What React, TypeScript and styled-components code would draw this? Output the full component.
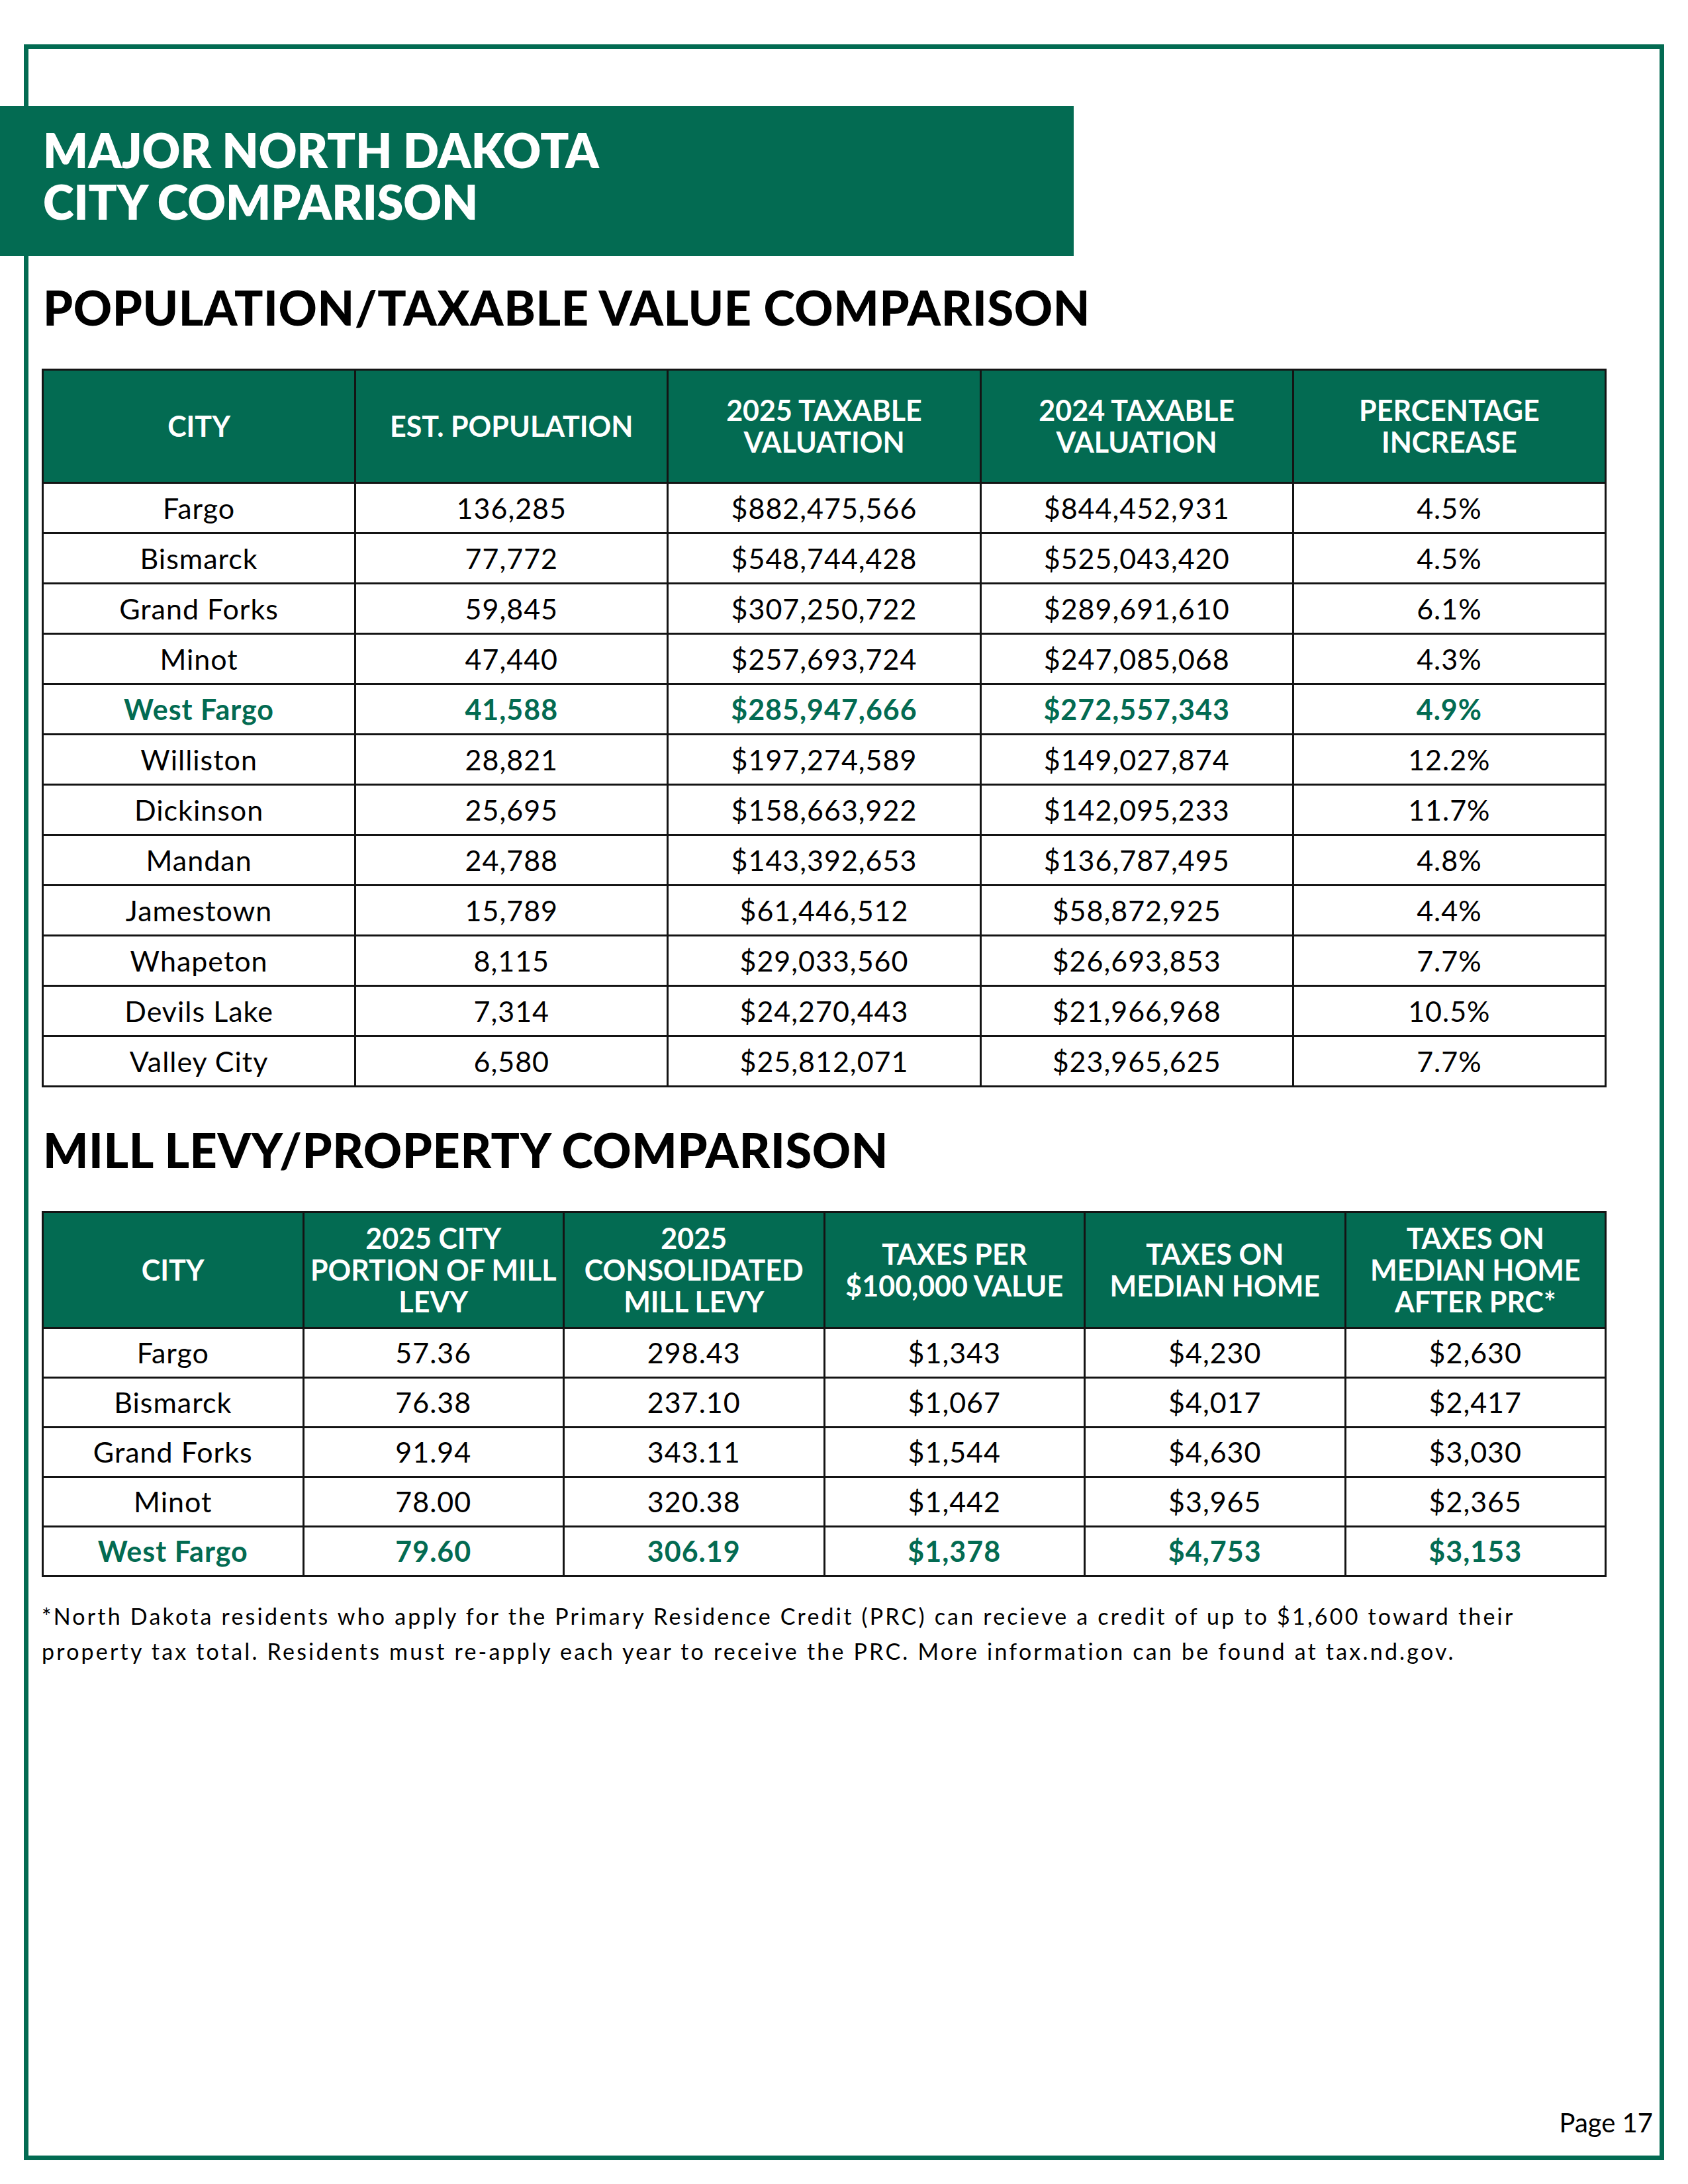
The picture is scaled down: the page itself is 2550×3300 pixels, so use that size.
import React from "react";
import styled, { createGlobalStyle } from "styled-components";

const GREEN = "#036b52";
const LINE = "#141414";

const GlobalStyle = createGlobalStyle`
  html, body { margin: 0; padding: 0; background: #ffffff; }
  body { font-family: Lato, "Open Sans", "Liberation Sans", sans-serif; color: #111; }
`;

const Page = styled.div`
  width: 2550px;
  height: 3300px;
  box-sizing: border-box;
  padding: 67px 36px 36px 36px;
`;

const Frame = styled.div`
  width: 2478px;
  height: 3197px;
  box-sizing: border-box;
  border: 7px solid ${GREEN};
  display: flex;
  flex-direction: column;
`;

const Banner = styled.div`
  margin: 86px 0 0 -43px;
  width: 1622px;
  height: 227px;
  box-sizing: border-box;
  padding: 28px 0 0 65px;
  background: ${GREEN};
  color: #fff;
  font-size: 71px;
  line-height: 78px;
  font-weight: 800;
  letter-spacing: 0px;
`;

const SectionTitle = styled.h2<{ $top: number }>`
  margin: ${(p) => p.$top}px 0 0 22px;
  font-size: 72px;
  line-height: 78px;
  font-weight: 900;
  color: #000;
  letter-spacing: 0.6px;
`;

const Table = styled.table<{ $top: number }>`
  margin: ${(p) => p.$top}px 0 0 20px;
  width: 2364px;
  border-collapse: collapse;
  table-layout: fixed;
  border: 3px solid ${LINE};
`;

const HeadCell = styled.th<{ $h: number }>`
  height: ${(p) => p.$h}px;
  padding: 0;
  background: ${GREEN};
  color: #fff;
  border: 3px solid ${LINE};
  font-size: 43px;
  line-height: 48px;
  font-weight: 700;
  text-align: center;
  vertical-align: middle;
  white-space: nowrap;
`;

const Cell = styled.td<{ $h: number; $hl?: boolean }>`
  height: ${(p) => p.$h}px;
  padding: 0;
  border: 3px solid ${LINE};
  font-size: 43px;
  line-height: 48px;
  letter-spacing: 1px;
  text-align: center;
  vertical-align: middle;
  white-space: nowrap;
  color: ${(p) => (p.$hl ? GREEN : "#000")};
  font-weight: ${(p) => (p.$hl ? 700 : 400)};
`;

const Footnote = styled.p`
  margin: 32px 0 0 20px;
  font-size: 34px;
  line-height: 53px;
  letter-spacing: 3.2px;
  color: #000;
  white-space: nowrap;
`;

const PageNumber = styled.div`
  margin: auto 10px 26px 0;
  align-self: flex-end;
  font-size: 40px;
  line-height: 48px;
  color: #000;
`;

type Row = { cells: string[]; hl?: boolean };

const popHeaders: string[][] = [
  ["CITY"],
  ["EST. POPULATION"],
  ["2025 TAXABLE", "VALUATION"],
  ["2024 TAXABLE", "VALUATION"],
  ["PERCENTAGE", "INCREASE"],
];

const popRows: Row[] = [
  { cells: ["Fargo", "136,285", "$882,475,566", "$844,452,931", "4.5%"] },
  { cells: ["Bismarck", "77,772", "$548,744,428", "$525,043,420", "4.5%"] },
  { cells: ["Grand Forks", "59,845", "$307,250,722", "$289,691,610", "6.1%"] },
  { cells: ["Minot", "47,440", "$257,693,724", "$247,085,068", "4.3%"] },
  { cells: ["West Fargo", "41,588", "$285,947,666", "$272,557,343", "4.9%"], hl: true },
  { cells: ["Williston", "28,821", "$197,274,589", "$149,027,874", "12.2%"] },
  { cells: ["Dickinson", "25,695", "$158,663,922", "$142,095,233", "11.7%"] },
  { cells: ["Mandan", "24,788", "$143,392,653", "$136,787,495", "4.8%"] },
  { cells: ["Jamestown", "15,789", "$61,446,512", "$58,872,925", "4.4%"] },
  { cells: ["Whapeton", "8,115", "$29,033,560", "$26,693,853", "7.7%"] },
  { cells: ["Devils Lake", "7,314", "$24,270,443", "$21,966,968", "10.5%"] },
  { cells: ["Valley City", "6,580", "$25,812,071", "$23,965,625", "7.7%"] },
];

const millHeaders: string[][] = [
  ["CITY"],
  ["2025 CITY", "PORTION OF MILL", "LEVY"],
  ["2025", "CONSOLIDATED", "MILL LEVY"],
  ["TAXES PER", "$100,000 VALUE"],
  ["TAXES ON", "MEDIAN HOME"],
  ["TAXES ON", "MEDIAN HOME", "AFTER PRC*"],
];

const millRows: Row[] = [
  { cells: ["Fargo", "57.36", "298.43", "$1,343", "$4,230", "$2,630"] },
  { cells: ["Bismarck", "76.38", "237.10", "$1,067", "$4,017", "$2,417"] },
  { cells: ["Grand Forks", "91.94", "343.11", "$1,544", "$4,630", "$3,030"] },
  { cells: ["Minot", "78.00", "320.38", "$1,442", "$3,965", "$2,365"] },
  { cells: ["West Fargo", "79.60", "306.19", "$1,378", "$4,753", "$3,153"], hl: true },
];

function DataTable({
  headers,
  rows,
  top,
  headH,
  rowH,
}: {
  headers: string[][];
  rows: Row[];
  top: number;
  headH: number;
  rowH: number;
}) {
  return (
    <Table $top={top}>
      <thead>
        <tr>
          {headers.map((lines, i) => (
            <HeadCell key={i} $h={headH}>
              {lines.map((l, j) => (
                <React.Fragment key={j}>
                  {j > 0 && <br />}
                  {l}
                </React.Fragment>
              ))}
            </HeadCell>
          ))}
        </tr>
      </thead>
      <tbody>
        {rows.map((r, i) => (
          <tr key={i}>
            {r.cells.map((c, j) => (
              <Cell key={j} $h={rowH} $hl={r.hl}>
                {c}
              </Cell>
            ))}
          </tr>
        ))}
      </tbody>
    </Table>
  );
}

export default function App() {
  return (
    <>
      <GlobalStyle />
      <Page>
        <Frame>
          <Banner>
            MAJOR NORTH DAKOTA
            <br />
            CITY COMPARISON
          </Banner>
          <SectionTitle $top={38}>POPULATION/TAXABLE VALUE COMPARISON</SectionTitle>
          <DataTable headers={popHeaders} rows={popRows} top={54} headH={168} rowH={73} />
          <SectionTitle $top={55}>MILL LEVY/PROPERTY COMPARISON</SectionTitle>
          <DataTable headers={millHeaders} rows={millRows} top={54} headH={172} rowH={72} />
          <Footnote>
            *North Dakota residents who apply for the Primary Residence Credit (PRC) can recieve a credit of up to $1,600 toward their
            <br />
            property tax total. Residents must re-apply each year to receive the PRC. More information can be found at tax.nd.gov.
          </Footnote>
          <PageNumber>Page 17</PageNumber>
        </Frame>
      </Page>
    </>
  );
}
